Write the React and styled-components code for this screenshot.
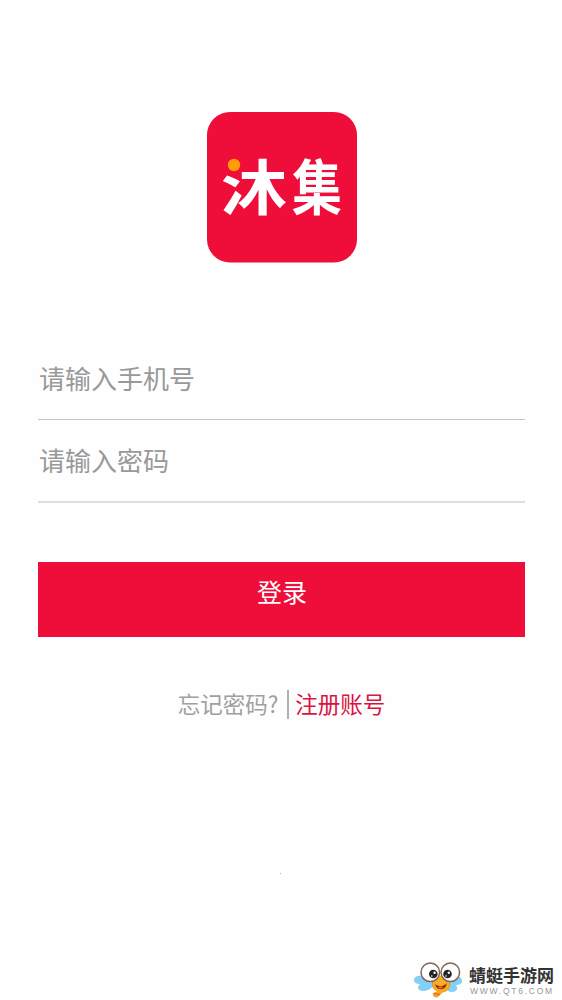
import React from "react";
import styled, { createGlobalStyle } from "styled-components";

const Global = createGlobalStyle`
  * { box-sizing: border-box; }
  body {
    margin: 0;
    background: #fefefe;
    font-family: "Noto Sans CJK SC", "Noto Sans", sans-serif;
  }
`;

const Screen = styled.main`
  position: relative;
  display: flex;
  flex-direction: column;
  align-items: center;
  height: 1000px;
  padding: 112px 37px 0 38px;
  overflow: hidden;
`;

const Logo = styled.svg`
  display: block;
  flex: none;
  width: 150px;
  height: 151px;
`;

const LogoText = styled.text`
  fill: #fff;
  font-size: 60px;
  font-weight: 700;
`;

const Form = styled.form`
  display: flex;
  flex-direction: column;
  width: 100%;
  margin-top: 74px;
`;

const Field = styled.label`
  display: flex;
  align-items: center;
  height: ${(p) => p.$height}px;
  padding: 0 0 1px 1px;
  border-bottom: ${(p) => p.$thickness}px solid ${(p) => p.$line};
  color: #999;
  font-size: 26px;
  font-weight: 400;
  line-height: 1;
`;

const LoginButton = styled.button`
  display: flex;
  justify-content: center;
  width: 100%;
  height: 75px;
  margin-top: 59px;
  padding: 16px 0 0 1px;
  border: 0;
  background: #ee0e39;
  color: #fff;
  font-family: inherit;
  font-size: 25px;
  font-weight: 400;
  line-height: 26px;
`;

const Links = styled.nav`
  display: flex;
  align-items: center;
  height: 30px;
  margin-top: 52px;
  font-size: 22.5px;
  line-height: 30px;
  white-space: nowrap;
`;

const Link = styled.span`
  margin-top: -2px;
  color: ${(p) => (p.$accent ? "#d91441" : "#a0a0a0")};
  font-weight: 400;
`;

const Divider = styled.span`
  width: 2px;
  height: 29px;
  margin: 0 6px 0 9px;
  background: #b0b0b0;
`;

const Dot = styled.span`
  width: 1px;
  height: 1px;
  margin: 154px 2px 0 0;
  background: #7cc;
`;

const Watermark = styled.aside`
  position: absolute;
  left: 414px;
  top: 961px;
  display: flex;
  gap: 7px;
`;

const Mascot = styled.svg`
  display: block;
  width: 48px;
  height: 38px;
`;

const Brand = styled.div`
  display: flex;
  flex-direction: column;
  padding-top: 5px;
  white-space: nowrap;
`;

const BrandName = styled.strong`
  color: #333;
  font-size: 17px;
  font-weight: 700;
  line-height: 18px;
`;

const BrandUrl = styled.span`
  margin: 2px 0 0 1px;
  color: #999;
  font-family: "Liberation Sans", sans-serif;
  font-size: 8.5px;
  line-height: 11px;
  letter-spacing: 1.75px;
`;

export default function App() {
  return (
    <>
      <Global />
      <Screen>
        <Logo viewBox="0 0 150 151" role="img">
          <rect width="150" height="150.5" rx="23" fill="#ee0e39" />
          <LogoText x="14" y="98" textLength="66" lengthAdjust="spacingAndGlyphs">
            沐
          </LogoText>
          <LogoText x="85" y="98" textLength="50" lengthAdjust="spacingAndGlyphs">
            集
          </LogoText>
          <rect x="15" y="42" width="23" height="17" fill="#ee0e39" />
          <circle cx="27" cy="53" r="6.2" fill="#ff9d0a" />
        </Logo>
        <Form onSubmit={(e) => e.preventDefault()}>
          <Field $height={83} $thickness={1} $line="#c4c4c4">请输入手机号</Field>
          <Field $height={83} $thickness={2} $line="#dedede">请输入密码</Field>
          <LoginButton type="submit">登录</LoginButton>
        </Form>
        <Links>
          <Link>忘记密码?</Link>
          <Divider />
          <Link $accent>注册账号</Link>
        </Links>
        <Dot />
        <Watermark>
          <Mascot viewBox="0 0 48 38">
            <g fill="#83cff5">
              <path d="M14 17C6 13 0 15 0 19c0 3 3 4 6 4-4 4-1 7 3 7 6 0 11-4 13-10z" />
              <path d="M36 17c7-4 12-1 12 3 0 3-3 4-6 4 3 4 0 7-4 7-6 0-8-6-9-11z" />
            </g>
            <path
              d="M20 19c3-5 11-5 14 0 4 5 1 11-5 12-3 1-3 4-6 5-3 0-5-2-3-4 1-1 4 0 3-2-5-2-6-7-3-11z"
              fill="#f8ac20"
              stroke="#d98212"
              strokeWidth=".6"
            />
            <path d="M21 23c4 3 8 3 12-1-1 5-4 7-7 6-3 0-4-2-5-5z" fill="#942818" />
            <path d="M24 26c2-1 4-1 5 0-1 2-4 2-5 0zM20 32l7 1-2 1-6-1z" fill="#ed631f" />
            <g fill="#fff" stroke="#806558" strokeWidth="1.5">
              <circle cx="16.3" cy="11.3" r="9.3" />
              <circle cx="36.3" cy="11.3" r="9.3" />
            </g>
            <g fill="#242424">
              <circle cx="19.3" cy="13" r="4.3" />
              <circle cx="33.5" cy="13" r="4.3" />
            </g>
            <g fill="#fff">
              <circle cx="20.6" cy="11.7" r="1.2" />
              <circle cx="34.8" cy="11.7" r="1.2" />
              <circle cx="17.8" cy="15" r=".8" />
              <circle cx="32" cy="15" r=".8" />
            </g>
          </Mascot>
          <Brand>
            <BrandName>蜻蜓手游网</BrandName>
            <BrandUrl>WWW.QT6.COM</BrandUrl>
          </Brand>
        </Watermark>
      </Screen>
    </>
  );
}
